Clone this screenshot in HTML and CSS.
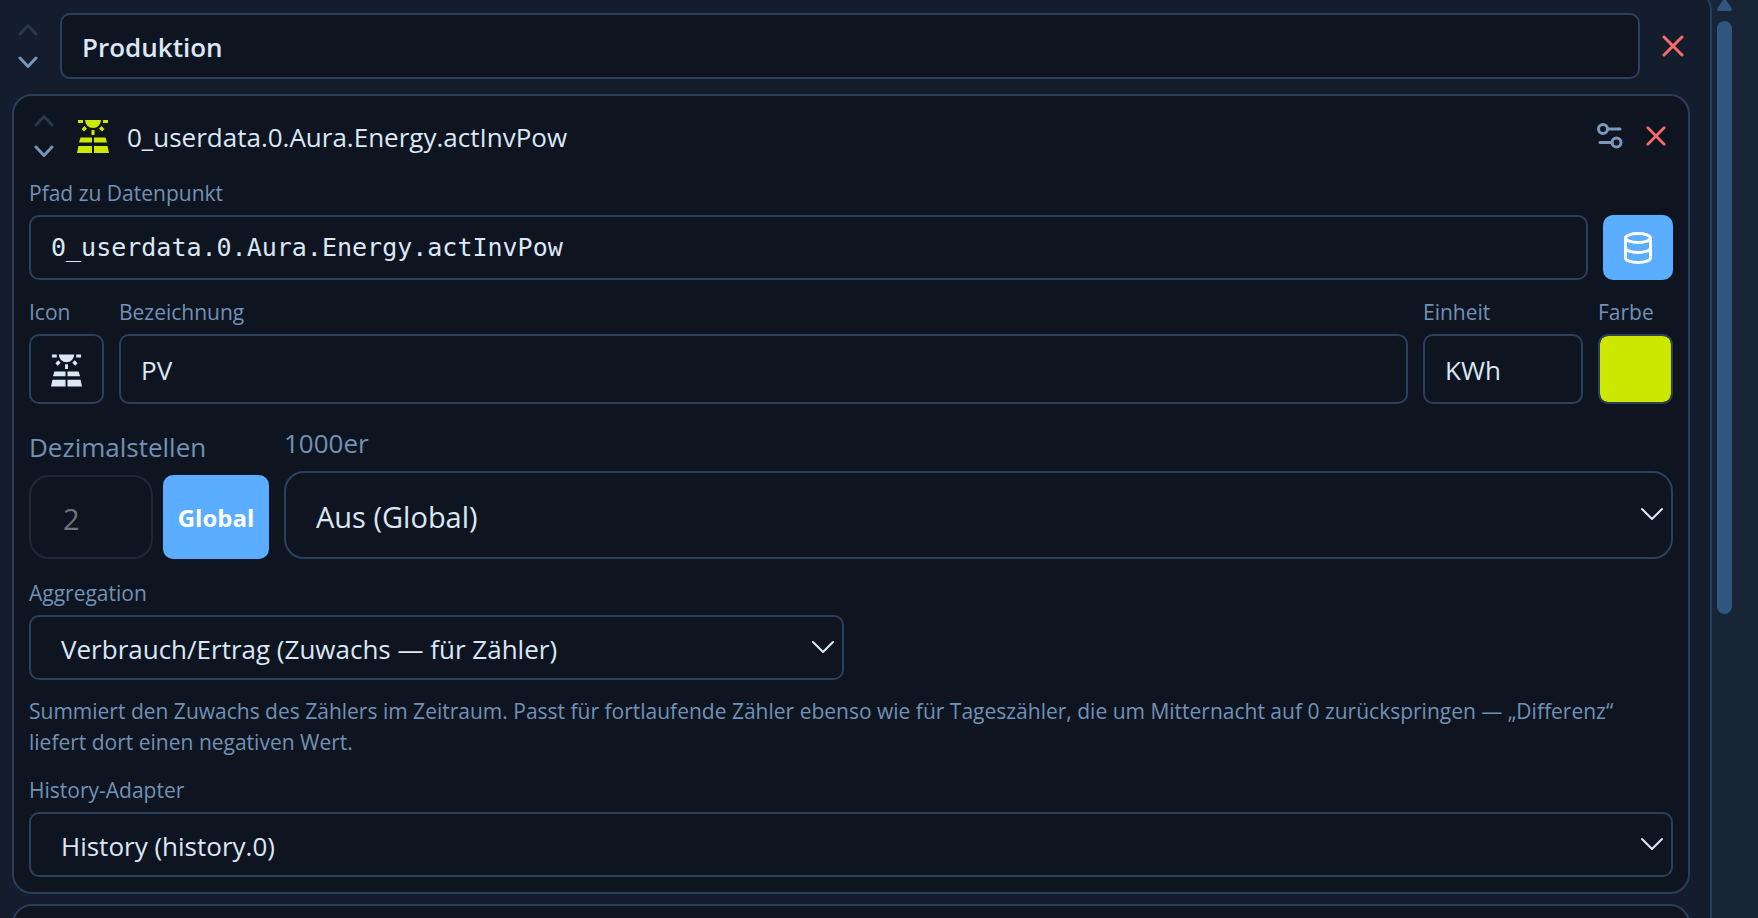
FILE: index.html
```html
<!DOCTYPE html>
<html lang="de">

<head>
    <meta charset="UTF-8">
    <meta name="viewport" content="width=device-width, initial-scale=1.0">
    <title>Produktion</title>
    <link rel="stylesheet" href="styles.css">
</head>

<body>
    <svg class="sprite" aria-hidden="true">
        <symbol id="up" viewBox="0 0 20 20">
            <path d="M2 14l8-8.5 8 8.5" />
        </symbol>
        <symbol id="down" viewBox="0 0 20 20">
            <path d="M2 6l8 8.5 8-8.5" />
        </symbol>
        <symbol id="close" viewBox="0 0 22 22">
            <path d="M2 2l18 18M20 2L2 20" />
        </symbol>
        <symbol id="arrow" viewBox="0 0 22 14">
            <path d="M1 2l10 10L21 2" />
        </symbol>
        <symbol id="solar" viewBox="0 0 32 33">
            <path d="M1 0h5v3H1zM26 0h5v3h-5zM8 0h16a8 8 0 0 1-16 0zM14.5 10h3v5h-3zM7.5 6l2.5 2.5-3 3L4.500 9zM24.500 6l3 3-2.500 2.500-3-3zM3.500 17.500H15v5H2zM17 17.500h11.500l1.500 5H17zM1.500 26H15v7H0zM17 26h13.500L32 33H17z" />
        </symbol>
    </svg>

    <div class="page">
        <main class="panel">
            <div class="group-head">
                <div class="move">
                    <button type="button" aria-label="Nach oben" disabled><svg><use href="#up" /></svg></button>
                    <button type="button" aria-label="Nach unten"><svg><use href="#down" /></svg></button>
                </div>
                <input class="box group-name" type="text" value="Produktion" aria-label="Gruppe">
                <button type="button" class="icon-btn delete" aria-label="Gruppe entfernen"><svg width="22" height="22"><use href="#close" /></svg></button>
            </div>

            <section class="card">
                <div class="card-head">
                    <div class="move">
                        <button type="button" aria-label="Nach oben" disabled><svg><use href="#up" /></svg></button>
                        <button type="button" aria-label="Nach unten"><svg><use href="#down" /></svg></button>
                    </div>
                    <svg class="solar lime" aria-hidden="true"><use href="#solar" /></svg>
                    <h2>0_userdata.0.Aura.Energy.actInvPow</h2>
                    <div class="actions">
                        <button type="button" class="icon-btn settings" aria-label="Optionen">
                            <svg width="26" height="26" viewBox="0 0 26 26">
                                <circle cx="6" cy="6" r="4.500" />
                                <path d="M11 6h12M3 19.500h12" />
                                <circle cx="19.500" cy="19.500" r="4.500" />
                            </svg>
                        </button>
                        <button type="button" class="icon-btn delete" aria-label="Entfernen"><svg width="20" height="20"><use href="#close" /></svg></button>
                    </div>
                </div>

                <div class="field">
                    <label for="path">Pfad zu Datenpunkt</label>
                    <div class="path-row">
                        <input class="box mono" id="path" type="text" value="0_userdata.0.Aura.Energy.actInvPow">
                        <button type="button" class="primary db" aria-label="Datenpunkt wählen">
                            <svg width="30" height="32" viewBox="0 0 30 32">
                                <ellipse cx="15" cy="6" rx="12.500" ry="4.500" />
                                <path d="M2.500 6v20c0 2.500 5.600 4.500 12.500 4.500s12.500-2 12.500-4.500V6M2.500 16c0 2.500 5.600 4.500 12.500 4.500s12.500-2 12.500-4.500" />
                            </svg>
                        </button>
                    </div>
                </div>

                <div class="row">
                    <div class="field">
                        <label for="icon">Icon</label>
                        <button type="button" class="box icon-pick" id="icon"><svg class="solar"><use href="#solar" /></svg></button>
                    </div>
                    <div class="field grow">
                        <label for="name">Bezeichnung</label>
                        <input class="box tall" id="name" type="text" value="PV">
                    </div>
                    <div class="field unit">
                        <label for="unit">Einheit</label>
                        <input class="box tall" id="unit" type="text" value="KWh">
                    </div>
                    <div class="field">
                        <label for="color">Farbe</label>
                        <input class="box color" id="color" type="color" value="#cde800">
                    </div>
                </div>

                <div class="row large">
                    <div class="field">
                        <label for="decimals">Dezimalstellen</label>
                        <div class="decimals">
                            <input class="box" id="decimals" type="text" placeholder="2" disabled>
                            <button type="button" class="primary">Global</button>
                        </div>
                    </div>
                    <div class="field grow">
                        <label for="thousands">1000er</label>
                        <div class="select">
                            <select class="box" id="thousands">
                                <option>Aus (Global)</option>
                            </select>
                            <svg><use href="#arrow" /></svg>
                        </div>
                    </div>
                </div>

                <div class="half">
                    <div class="field">
                        <label for="aggregation">Aggregation</label>
                        <div class="select">
                            <select class="box" id="aggregation">
                                <option>Verbrauch/Ertrag (Zuwachs — für Zähler)</option>
                            </select>
                            <svg><use href="#arrow" /></svg>
                        </div>
                    </div>
                </div>

                <p class="hint">Summiert den Zuwachs des Zählers im Zeitraum. Passt für fortlaufende Zähler ebenso wie für Tageszähler, die um Mitternacht auf 0 zurückspringen — „Differenz“ liefert dort einen negativen Wert.</p>

                <div class="field">
                    <label for="history">History-Adapter</label>
                    <div class="select">
                        <select class="box" id="history">
                            <option>History (history.0)</option>
                        </select>
                        <svg><use href="#arrow" /></svg>
                    </div>
                </div>
            </section>

            <section class="card next"></section>
        </main>

        <div class="scroll">
            <svg width="15" height="11" viewBox="0 0 15 11" aria-hidden="true">
                <path d="M6 0h3l5.500 8q1 3-1.500 3H2q-2.500 0-1.500-3z" />
            </svg>
            <div class="thumb"></div>
        </div>
    </div>
</body>

</html>
```

FILE: styles.css
```css
* {
    box-sizing: border-box;
}

body {
    margin: 0;
    background: #172536;
    color: #dce7f5;
    font-family: "Open Sans", "Noto Sans", sans-serif;
    font-size: 26px;
}

button,
input,
select {
    margin: 0;
    color: inherit;
    font: inherit;
}

button {
    padding: 0;
    border: none;
    background: none;
    cursor: pointer;
}

svg {
    display: block;
    fill: none;
    stroke: currentColor;
    stroke-width: 2;
    stroke-linecap: round;
    stroke-linejoin: round;
}

.sprite {
    display: none;
}

.page {
    display: flex;
    height: 100vh;
    overflow: hidden;
}

.panel {
    flex: 1;
    min-width: 0;
    height: 200vh;
    margin-top: -10px;
    padding: 21px 20px 0 12px;
    border: 2px solid #2c3d58;
    border-left: none;
    border-top-right-radius: 20px;
    background: #141d2d;
}

/* fields */
.box {
    display: block;
    width: 100%;
    height: 65px;
    padding: 2px 20px 0;
    border: 2px solid #2c3f5b;
    border-radius: 10px;
    background: #0e1521;
    outline: none;
}

.field {
    display: flex;
    flex-direction: column;
    gap: 6px;
}

.field label {
    color: #7291b5;
    font-size: 21px;
    line-height: 32px;
}

.row {
    display: flex;
    align-items: flex-end;
    gap: 15px;
}

.grow {
    flex: 1;
    min-width: 0;
}

.primary {
    border-radius: 10px;
    background: #5aadff;
    color: #fff;
}

.icon-btn {
    display: flex;
    justify-content: center;
    align-items: center;
    width: 34px;
    height: 34px;
}

.delete {
    color: #f96b6b;
}

.delete svg {
    stroke-width: 3;
}

.settings {
    color: #7b97b9;
}

.settings svg {
    stroke-width: 3;
}

.move {
    display: flex;
    flex-direction: column;
    align-items: center;
    gap: 10px;
    width: 30px;
    color: #7596bb;
}

.move svg {
    width: 20px;
    height: 20px;
    stroke-width: 3;
}

.move button:disabled {
    color: #2a3748;
}

/* group */
.group-head {
    display: flex;
    align-items: center;
    gap: 16px;
    margin-bottom: 15px;
}

.group-head .move {
    gap: 12px;
    width: 32px;
}

.group-name {
    flex: 1;
    height: 66px;
    font-weight: 600;
}

/* card */
.card {
    display: flex;
    flex-direction: column;
    gap: 16px;
    padding: 15px;
    border: 2px solid #2c3d58;
    border-radius: 20px;
    background: #0e1521;
}

.card.next {
    height: 800px;
    margin-top: 10px;
}

.card-head {
    display: flex;
    align-items: center;
    gap: 18px;
}

.card-head h2 {
    flex: 1;
    margin: 0;
    padding-top: 2px;
    font-size: 26px;
    font-weight: 400;
    line-height: 36px;
}

.actions {
    display: flex;
    gap: 12px;
}

.solar {
    width: 32px;
    height: 33px;
    fill: currentColor;
    stroke: none;
}

.lime {
    color: #cde800;
}

.path-row {
    display: flex;
    gap: 15px;
}

.mono {
    padding-top: 0;
    font-family: "DejaVu Sans Mono", monospace;
    font-size: 25px;
}

.db {
    display: flex;
    justify-content: center;
    align-items: center;
    flex: none;
    width: 70px;
}

.db svg {
    stroke-width: 3;
}

.tall {
    height: 70px;
}

.icon-pick {
    display: flex;
    justify-content: center;
    align-items: center;
    width: 75px;
    height: 70px;
}

.unit {
    width: 160px;
}

.color {
    width: 75px;
    height: 70px;
    padding: 0;
    overflow: hidden;
    appearance: none;
}

.color::-webkit-color-swatch-wrapper {
    padding: 0;
}

.color::-webkit-color-swatch {
    border: none;
    border-radius: 8px;
}

.large {
    margin: 4px 0 2px;
}

.large .field {
    gap: 9px;
}

.large label {
    font-size: 26px;
    line-height: 38px;
}

.large .box {
    height: 88px;
    padding: 2px 30px 0;
    border-radius: 20px;
    font-size: 29px;
}

.decimals {
    display: flex;
    gap: 10px;
}

.large .decimals .box {
    width: 124px;
    height: 84px;
    padding-left: 32px;
    border-color: #1c2737;
}

.decimals .box::placeholder {
    color: #6d757f;
}

.decimals .primary {
    width: 106px;
    font-size: 24px;
    font-weight: 700;
}

.half {
    display: grid;
    grid-template-columns: 1fr 1fr;
    gap: 15px;
}

.select {
    position: relative;
}

.select select {
    padding: 2px 30px 0;
    appearance: none;
}

.select svg {
    position: absolute;
    top: 50%;
    right: 10px;
    width: 22px;
    height: 14px;
    margin-top: -8px;
    pointer-events: none;
}

.hint {
    margin: 0;
    color: #7291b5;
    font-size: 21px;
    line-height: 31px;
}

/* scrollbar */
.scroll {
    width: 46px;
    padding-left: 5px;
}

.scroll svg {
    fill: #2f5780;
    stroke: none;
}

.thumb {
    width: 15px;
    height: 593px;
    margin-top: 10px;
    border-radius: 8px;
    background: #2f5780;
}
```
